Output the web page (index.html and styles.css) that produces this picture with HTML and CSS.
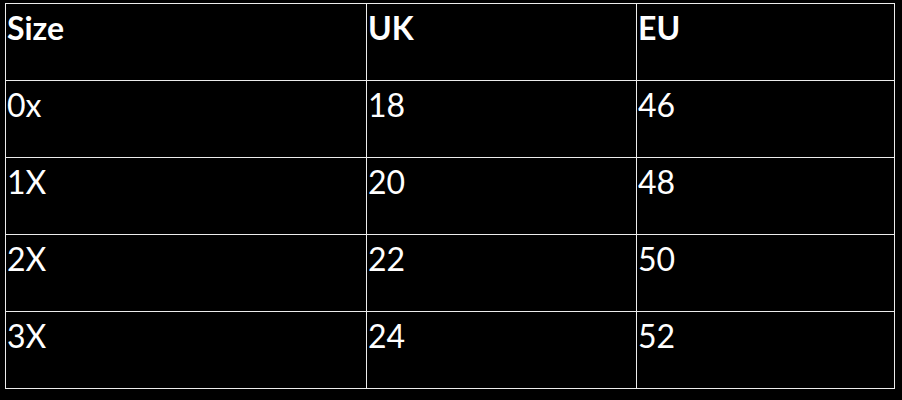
FILE: index.html
```html
<!DOCTYPE html>
<html>
<head>
<meta charset="utf-8">
<link rel="stylesheet" href="styles.css">
</head>
<body>
<div class="size-table">
  <div class="cell head">Size</div>
  <div class="cell head">UK</div>
  <div class="cell head">EU</div>
  <div class="cell">0x</div>
  <div class="cell">18</div>
  <div class="cell">46</div>
  <div class="cell">1X</div>
  <div class="cell">20</div>
  <div class="cell">48</div>
  <div class="cell">2X</div>
  <div class="cell">22</div>
  <div class="cell">50</div>
  <div class="cell">3X</div>
  <div class="cell">24</div>
  <div class="cell">52</div>
</div>
</body>
</html>
```
FILE: styles.css
```css
html, body {
  margin: 0;
  padding: 0;
  background: #000;
}
body {
  padding: 3px 0 0 5px;
  height: 400px;
  box-sizing: border-box;
}
.size-table {
  display: grid;
  grid-template-columns: 360px 269px 257px;
  grid-auto-rows: 76px;
  gap: 1px;
  padding: 1px;
  width: max-content;
  background: #ececec;
}
.cell {
  background: #000;
  color: #fff;
  font-family: Lato, "Open Sans", sans-serif;
  font-size: 32px;
  line-height: 32px;
  padding: 8px 0 0 1px;
}
.head {
  font-weight: bold;
}
```
